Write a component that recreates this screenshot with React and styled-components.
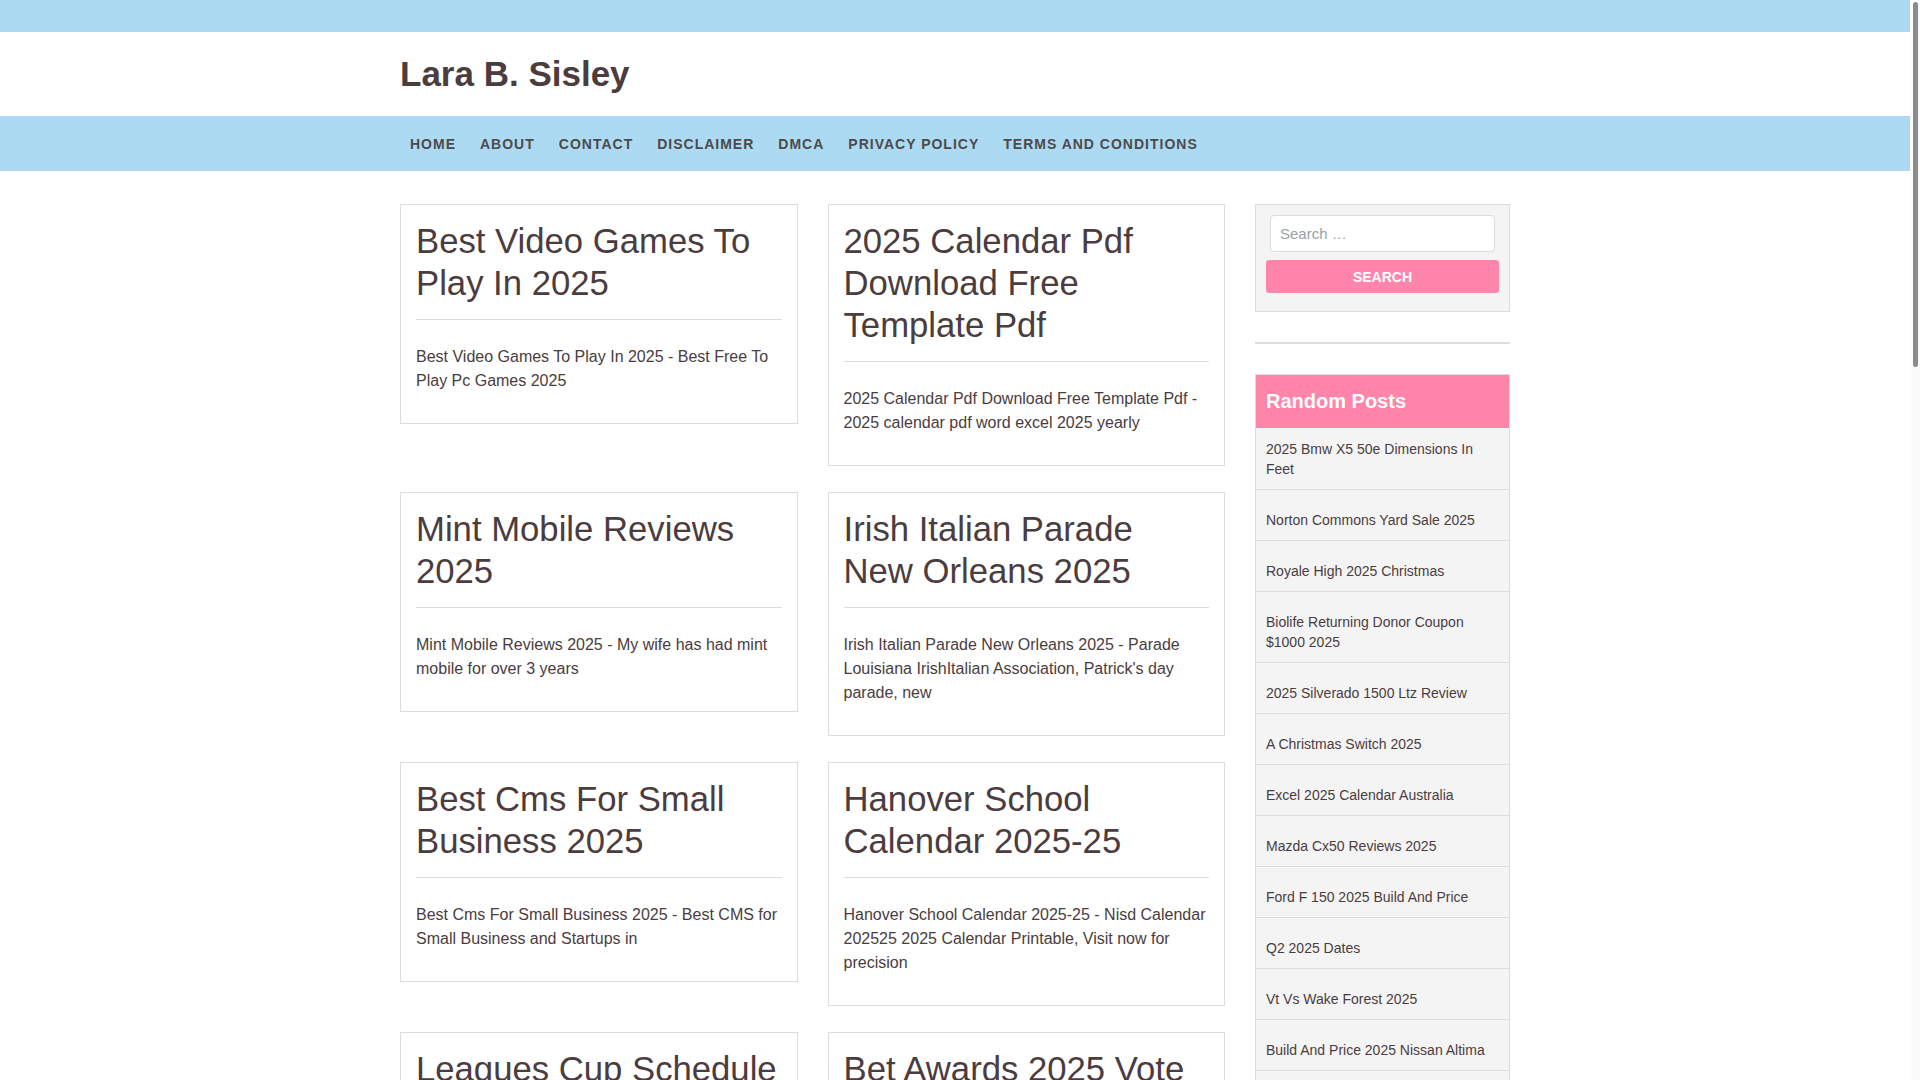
import styled, { createGlobalStyle } from 'styled-components';

const POSTS = [
  {
    id: 1,
    title: 'Best Video Games To Play In 2025',
    excerpt: 'Best Video Games To Play In 2025 - Best Free To Play Pc Games 2025',
  },
  {
    id: 2,
    title: '2025 Calendar Pdf Download Free Template Pdf',
    excerpt: '2025 Calendar Pdf Download Free Template Pdf - 2025 calendar pdf word excel 2025 yearly',
  },
  {
    id: 3,
    title: 'Mint Mobile Reviews 2025',
    excerpt: 'Mint Mobile Reviews 2025 - My wife has had mint mobile for over 3 years',
  },
  {
    id: 4,
    title: 'Irish Italian Parade New Orleans 2025',
    excerpt:
      "Irish Italian Parade New Orleans 2025 - Parade Louisiana IrishItalian Association, Patrick's day parade, new",
  },
  {
    id: 5,
    title: 'Best Cms For Small Business 2025',
    excerpt: 'Best Cms For Small Business 2025 - Best CMS for Small Business and Startups in',
  },
  {
    id: 6,
    title: 'Hanover School Calendar 2025-25',
    excerpt:
      'Hanover School Calendar 2025-25 - Nisd Calendar 202525 2025 Calendar Printable, Visit now for precision',
  },
  {
    id: 7,
    title: 'Leagues Cup Schedule 2025',
    excerpt: 'Leagues Cup Schedule 2025 - Leagues Cup 2025 schedule, dates and fixtures',
  },
  {
    id: 8,
    title: 'Bet Awards 2025 Vote Online',
    excerpt: 'Bet Awards 2025 Vote Online - How to vote for the BET Awards 2025',
  },
];

const RANDOM_POSTS = [
  '2025 Bmw X5 50e Dimensions In Feet',
  'Norton Commons Yard Sale 2025',
  'Royale High 2025 Christmas',
  'Biolife Returning Donor Coupon $1000 2025',
  '2025 Silverado 1500 Ltz Review',
  'A Christmas Switch 2025',
  'Excel 2025 Calendar Australia',
  'Mazda Cx50 Reviews 2025',
  'Ford F 150 2025 Build And Price',
  'Q2 2025 Dates',
  'Vt Vs Wake Forest 2025',
  'Build And Price 2025 Nissan Altima',
  'Nba Draft 2025 Mock',
  'Spring Break 2025 Dates',
];

const NAV = ['Home', 'About', 'Contact', 'Disclaimer', 'DMCA', 'Privacy Policy', 'Terms and Conditions'];

const GlobalStyle = createGlobalStyle`
  * { box-sizing: border-box; }
  body {
    margin: 0 10px 0 0;
    background: #fff;
    font-family: "Liberation Sans", Arial, sans-serif;
    color: #4b3c40;
  }
  a { color: inherit; text-decoration: none; }
`;

// the page is shown with a browser scrollbar down the right edge
const ScrollTrack = styled.div`
  position: fixed;
  top: 0;
  right: 0;
  bottom: 0;
  width: 10px;
  background: #fbfbfb;
`;

const ScrollThumb = styled.div`
  margin: 2px 2px 0 3px;
  height: 365px;
  border-radius: 3px;
  background: #8c8c8c;
`;

const TopBar = styled.div`
  height: 32px;
  background: #acdaf3;
`;

const Container = styled.div`
  max-width: 1110px;
  margin: 0 auto;
`;

const Header = styled.header`
  height: 84px;
  display: flex;
  align-items: center;
`;

const SiteTitle = styled.h1`
  margin: 0 0 2px;
  font-size: 35px;
  font-weight: 700;
  line-height: 1;
  color: #4b3c40;
`;

const NavBar = styled.nav`
  height: 55px;
  background: #acdaf3;
`;

const NavList = styled.ul`
  list-style: none;
  margin: 0;
  padding: 0 0 0 10px;
  height: 55px;
  display: flex;
  align-items: center;
  gap: 24px;
`;

const NavLink = styled.a`
  font-size: 14px;
  font-weight: 700;
  letter-spacing: 1px;
  text-transform: uppercase;
  color: #4d4a4b;
`;

const Layout = styled.div`
  display: grid;
  grid-template-columns: 825px 255px;
  gap: 30px;
  padding-top: 33px;
  align-items: start;
`;

const PostGrid = styled.div`
  display: grid;
  grid-template-columns: 1fr 1fr;
  column-gap: 30px;
  row-gap: 26px;
  align-items: start;
`;

const PostCard = styled.article`
  border: 1px solid #ddd;
  padding: 15px;
  background: #fff;
`;

const PostTitle = styled.h2`
  margin: 0;
  font-size: 34.7px;
  font-weight: 400;
  line-height: 42px;
  color: #4b3c40;
`;

const Divider = styled.hr`
  border: 0;
  border-top: 1px solid #ddd;
  margin: 15px 0 25px;
`;

const Excerpt = styled.p`
  margin: 0 0 15px;
  font-size: 16px;
  line-height: 24px;
  color: #4b3c40;
`;

const Sidebar = styled.aside`
  display: flex;
  flex-direction: column;
`;

const SearchWidget = styled.form`
  background: #f4f4f4;
  border: 1px solid #ddd;
  padding: 10px 10px 18px;
  display: flex;
  flex-direction: column;
  gap: 8px;
`;

const SearchInput = styled.input`
  margin: 0 4px;
  height: 37px;
  border: 1px solid #ddd;
  border-radius: 4px;
  background: #fff;
  padding: 0 9px;
  font-family: inherit;
  font-size: 15px;
  color: #4b3c40;

  &::placeholder {
    color: #9aa1a1;
  }
`;

const SearchButton = styled.button`
  height: 33px;
  border: 0;
  border-radius: 3px;
  background: #ff85ab;
  color: #fff;
  font-family: inherit;
  font-size: 14px;
  font-weight: 700;
  text-transform: uppercase;
`;

const WidgetRule = styled.div`
  height: 2px;
  background: #ddd;
  margin: 30px 0;
`;

const PostsWidget = styled.section`
  border: 1px solid #ddd;
  border-bottom: 0;
`;

const WidgetTitle = styled.h3`
  margin: 0;
  height: 53px;
  display: flex;
  align-items: center;
  padding: 0 10px;
  background: #ff85ab;
  color: #fff;
  font-size: 20px;
  font-weight: 700;
`;

const PostList = styled.ul`
  list-style: none;
  margin: 0;
  padding: 0;
`;

const PostItem = styled.li`
  background: #f4f4f4;
  border-bottom: 1px solid #ddd;
  padding: 20px 10px 10px;
  font-size: 14px;
  line-height: 20px;
  color: #4b3c40;

  &:first-child {
    padding-top: 11px;
  }
`;

const App = () => {
  return (
    <>
      <GlobalStyle />
      <TopBar />
      <Container>
        <Header>
          <SiteTitle>Lara B. Sisley</SiteTitle>
        </Header>
      </Container>
      <NavBar>
        <Container>
          <NavList>
            {NAV.map((item) => (
              <li key={item}>
                <NavLink href="#">{item}</NavLink>
              </li>
            ))}
          </NavList>
        </Container>
      </NavBar>
      <Container>
        <Layout>
          <PostGrid>
            {POSTS.map((post) => (
              <PostCard key={post.id}>
                <PostTitle>{post.title}</PostTitle>
                <Divider />
                <Excerpt>{post.excerpt}</Excerpt>
              </PostCard>
            ))}
          </PostGrid>
          <Sidebar>
            <SearchWidget onSubmit={(e) => e.preventDefault()}>
              <SearchInput type="search" placeholder="Search …" />
              <SearchButton type="submit">Search</SearchButton>
            </SearchWidget>
            <WidgetRule />
            <PostsWidget>
              <WidgetTitle>Random Posts</WidgetTitle>
              <PostList>
                {RANDOM_POSTS.map((title) => (
                  <PostItem key={title}>
                    <a href="#">{title}</a>
                  </PostItem>
                ))}
              </PostList>
            </PostsWidget>
          </Sidebar>
        </Layout>
      </Container>
      <ScrollTrack>
        <ScrollThumb />
      </ScrollTrack>
    </>
  );
};

export default App;
